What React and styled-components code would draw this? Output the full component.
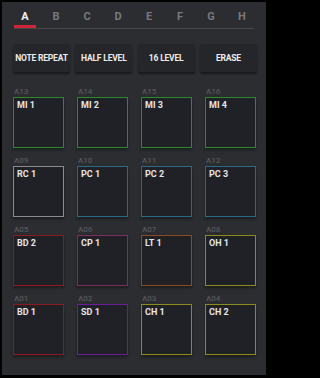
import React, { useState } from "react";
import styled, { createGlobalStyle } from "styled-components";

const GlobalStyle = createGlobalStyle`
  html, body {
    margin: 0;
    padding: 0;
    background: #000;
  }
  * {
    box-sizing: border-box;
  }
`;

const banks = ["A", "B", "C", "D", "E", "F", "G", "H"];
const modes = ["NOTE REPEAT", "HALF LEVEL", "16 LEVEL", "ERASE"];

const colors = {
  green: "#2b8a2b",
  grey: "#8c8c8e",
  teal: "#2a6a86",
  red: "#8e1a1e",
  pink: "#7d2e5c",
  brown: "#8a4a24",
  olive: "#8c8c1c",
  purple: "#6a1e9c",
};

const pads = [
  { id: "A13", name: "MI 1", color: colors.green },
  { id: "A14", name: "MI 2", color: colors.green },
  { id: "A15", name: "MI 3", color: colors.green },
  { id: "A16", name: "MI 4", color: colors.green },
  { id: "A09", name: "RC 1", color: colors.grey },
  { id: "A10", name: "PC 1", color: colors.teal },
  { id: "A11", name: "PC 2", color: colors.teal },
  { id: "A12", name: "PC 3", color: colors.teal },
  { id: "A05", name: "BD 2", color: colors.red },
  { id: "A06", name: "CP 1", color: colors.pink },
  { id: "A07", name: "LT 1", color: colors.brown },
  { id: "A08", name: "OH 1", color: colors.olive },
  { id: "A01", name: "BD 1", color: colors.red },
  { id: "A02", name: "SD 1", color: colors.purple },
  { id: "A03", name: "CH 1", color: colors.olive },
  { id: "A04", name: "CH 2", color: colors.olive },
];

const App = () => {
  const [bank, setBank] = useState("A");

  return (
    <>
      <GlobalStyle />
      <Frame>
        <Tabs>
          {banks.map(b => (
            <Tab key={b} active={b === bank} onClick={() => setBank(b)}>
              {b}
            </Tab>
          ))}
        </Tabs>
        <Modes>
          {modes.map(m => (
            <ModeButton key={m}>{m}</ModeButton>
          ))}
        </Modes>
        <PadGrid>
          {pads.map(pad => (
            <Cell key={pad.id}>
              <PadId>{pad.id}</PadId>
              <Pad color={pad.color}>{pad.name}</Pad>
            </Cell>
          ))}
        </PadGrid>
      </Frame>
    </>
  );
};

export default App;

export const Frame = styled.div`
  width: 269px;
  height: 378px;
  background: #2c2d31;
  border-style: solid;
  border-color: #000;
  border-width: 2px 3px 3px 2px;
  font-family: Roboto, "Liberation Sans", sans-serif;
  overflow: hidden;
`;

export const Tabs = styled.div`
  display: flex;
  gap: 9px;
  width: 240px;
  margin: 0 0 0 12px;
  padding-top: 8px;
  border-bottom: 1px solid #46474b;
`;

export const Tab = styled.div`
  width: 22px;
  height: 18px;
  text-align: center;
  font-size: 11px;
  font-weight: 700;
  line-height: 13px;
  color: ${p => (p.active ? "#f2f2f2" : "#77787d")};
  border-bottom: 3px solid ${p => (p.active ? "#d0243a" : "transparent")};
  cursor: pointer;
`;

export const Modes = styled.div`
  display: grid;
  grid-template-columns: repeat(4, 1fr);
  gap: 5.3px;
  width: 244px;
  margin: 15px 0 0 11px;
`;

export const ModeButton = styled.button`
  height: 28px;
  padding: 0;
  border: none;
  border-radius: 2px;
  background: #25262a;
  box-shadow: 0 2px 2px rgba(0, 0, 0, 0.45);
  color: #ececec;
  font-family: Roboto, "Liberation Sans", sans-serif;
  font-size: 8.5px;
  font-weight: 700;
  letter-spacing: -0.2px;
  white-space: nowrap;
  cursor: pointer;
`;

export const PadGrid = styled.div`
  display: grid;
  grid-template-columns: repeat(4, 51px);
  column-gap: 13px;
  row-gap: 8px;
  margin: 15px 0 0 11px;
`;

export const Cell = styled.div`
  display: flex;
  flex-direction: column;
`;

export const PadId = styled.div`
  height: 10px;
  padding-left: 1px;
  font-size: 8px;
  line-height: 10px;
  font-weight: 500;
  color: #56575b;
`;

export const Pad = styled.div`
  width: 51px;
  height: 51px;
  padding: 2px 3px;
  background: #202126;
  border: 1px solid ${p => p.color};
  box-shadow: 0 2px 3px rgba(0, 0, 0, 0.4);
  color: #e6e6e6;
  font-size: 9px;
  font-weight: 700;
  line-height: 11px;
`;
